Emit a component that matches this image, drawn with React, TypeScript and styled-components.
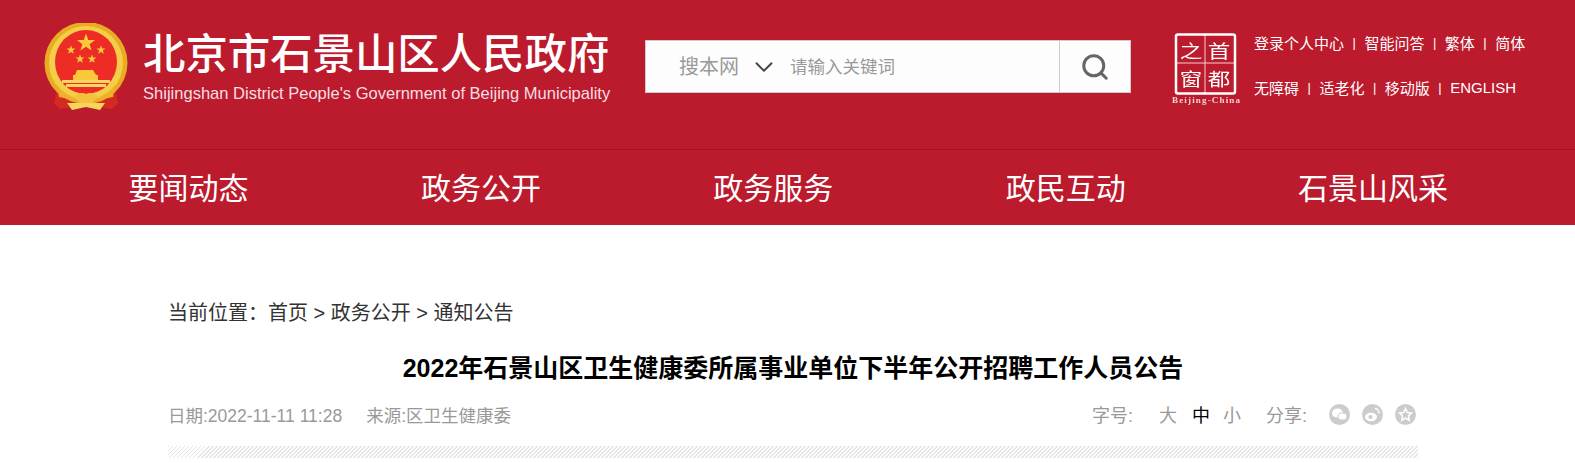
import styled, { createGlobalStyle } from "styled-components";
import { ChevronDown, Search } from "lucide-react";

const GlobalStyle = createGlobalStyle`
  html, body {
    margin: 0;
    padding: 0;
    background: #fff;
    overflow: hidden;
  }
  body {
    font-family: "Liberation Sans", "Noto Sans CJK SC", sans-serif;
  }
`;

const Page = styled.div`
  width: 1575px;
  height: 463px;
  overflow: hidden;
`;
const Header = styled.header`
  display: flex;
  align-items: flex-start;
  height: 149px;
  background: #bc1a2d;
  border-bottom: 1px solid #a01526;
  color: #fff;
`;
const Brand = styled.div`
  display: flex;
  width: 645px;
  padding: 23px 0 0 44px;
  box-sizing: border-box;
`;
const EmblemArt = styled.svg`
  display: block;
  flex: none;
  width: 84px;
  height: 90px;
  filter: blur(0.4px);
`;
const BrandText = styled.div`
  margin-left: 15px;
  padding-top: 7px;
`;
const BrandName = styled.div`
  font-size: 42.4px;
  line-height: 50px;
  font-weight: 500;
  white-space: nowrap;
`;
const BrandSub = styled.div`
  margin-top: 4px;
  font-size: 16.55px;
  line-height: 20px;
  color: #f6dfe2;
  white-space: nowrap;
`;
const SearchBox = styled.div`
  display: flex;
  align-items: center;
  width: 486px;
  height: 53px;
  margin-top: 40px;
  background: #fdfdfd;
  border: 1px solid #ccc;
  box-sizing: border-box;
`;
const SearchScope = styled.span`
  margin: 0 0 3px 33px;
  font-size: 20px;
  color: #999;
`;
const Chevron = styled(ChevronDown)`
  margin-left: 10px;
  color: #444;
`;
const SearchHint = styled.span`
  margin: 0 0 2px 11px;
  flex: 1;
  font-size: 17.5px;
  color: #999;
`;
const SearchButton = styled.div`
  display: flex;
  align-items: center;
  justify-content: center;
  width: 70px;
  height: 100%;
  border-left: 1px solid #ccc;
  color: #666;
`;
const Stamp = styled.svg`
  display: block;
  flex: none;
  width: 72px;
  height: 76px;
  margin: 33px 0 0 39px;
  filter: blur(0.3px);
`;
const StampChar = styled.text`
  fill: #fff;
  font-size: 18px;
  text-anchor: middle;
  font-family: "Noto Sans CJK SC", sans-serif;
`;
const StampCaption = styled.text`
  fill: #f3d3d7;
  font-size: 9px;
  font-weight: 700;
  font-family: "Liberation Serif", serif;
`;
const Links = styled.div`
  margin: 32px 0 0 12px;
`;
const LinkRow = styled.div`
  display: flex;
  height: 20px;
  align-items: center;
  margin-bottom: 25px;
  font-size: 15px;
  white-space: nowrap;
`;
const Sep = styled.span`
  margin: 0 8.5px;
  font-size: 13px;
`;
const Nav = styled.nav`
  display: flex;
  gap: 172.4px;
  height: 75px;
  padding: 0 0 3px 128.5px;
  box-sizing: border-box;
  align-items: center;
  background: #bc1a2d;
  color: #fff;
  font-size: 30px;
  white-space: nowrap;
`;
const Article = styled.main`
  width: 1250px;
  margin-left: 168px;
`;
const Crumbs = styled.div`
  padding-top: 75px;
  font-size: 20px;
  line-height: 26px;
  color: #333;
`;
const Title = styled.h1`
  margin: 26px 0 0;
  font-size: 25px;
  line-height: 32px;
  font-weight: 700;
  color: #000;
  text-align: center;
`;
const Meta = styled.div`
  display: flex;
  align-items: center;
  justify-content: space-between;
  height: 26px;
  margin-top: 17px;
  font-size: 18px;
  color: #999;
`;
const MetaLeft = styled.div`
  display: flex;
  gap: 24px;
  font-size: 17.5px;
`;
const Tools = styled.div`
  display: flex;
  align-items: center;
  padding-right: 2px;
`;
const Size = styled.span<{ $gap: number; $on?: boolean }>`
  margin-left: ${(p) => p.$gap}px;
  color: ${(p) => (p.$on ? "#000" : "#999")};
`;
const ToolLabel = styled.span<{ $gap?: number }>`
  margin-left: ${(p) => p.$gap ?? 0}px;
`;
const ShareIcon = styled.svg`
  display: block;
  width: 21px;
  height: 21px;
  margin-left: 12px;
  &:first-of-type {
    margin-left: 22px;
  }
`;
const Hatch = styled.div`
  height: 12px;
  margin-top: 19px;
  background: repeating-linear-gradient(135deg, #e4e4e4 0 1.4px, #fff 1.4px 2.83px);
`;

const star = "M0-10 2.4-3.2 9.5-3.1 3.8 1.2 5.9 8 0 4 -5.9 8 -3.8 1.2 -9.5-3.1 -2.4-3.2Z";

function Emblem() {
  return (
    <EmblemArt viewBox="0 0 84 90">
      <path d="M14 62 L10 80 L16 86 L30 84 L42 78 L54 84 L68 86 L74 80 L70 62Z" fill="#d42a22" />
      <ellipse cx="42" cy="40" rx="41.5" ry="41" fill="#e8ac23" />
      <ellipse cx="42" cy="40" rx="37" ry="37" fill="#f4cd49" />
      <ellipse cx="42" cy="39" rx="31" ry="32" fill="#ec2c25" />
      <g fill="#f7c93b">
        <path d={star} transform="translate(42 20) scale(0.95)" />
        <path d={star} transform="translate(27 27) scale(0.48)" />
        <path d={star} transform="translate(57 27) scale(0.48)" />
        <path d={star} transform="translate(36 36) scale(0.48)" />
        <path d={star} transform="translate(48 36) scale(0.48)" />
        <path d="M33 47h16l3 5h2v5h-25v-5h2z" />
      </g>
      <path d="M18 57h48v3H18zM22 61h40v3H22z" fill="#f6d561" />
      <path d="M13 62q6 8 14 11l8 5h14l8-5q8-3 14-11l-2 12-20 4h-14l-20-4z" fill="#eeb12b" />
      <path d="M30 74q6-6 12-3q6-3 12 3l-6 6h-12z" fill="#f4c23e" />
      <path d="M23 80h38l-5 7-14-3-14 3z" fill="#f7d45a" />
    </EmblemArt>
  );
}

function BeijingStamp() {
  return (
    <Stamp viewBox="0 0 72 76">
      <rect x="6" y="1.5" width="59" height="59" rx="2" fill="none" stroke="#fff" strokeWidth="2.5" />
      <path d="M35 2v58M7 30h57" stroke="#fff" strokeWidth="1" opacity="0.8" />
      <StampChar transform="translate(21 25) scale(1.25 1)">之</StampChar>
      <StampChar transform="translate(49 25) scale(1.25 1)">首</StampChar>
      <StampChar transform="translate(21 53) scale(1.25 1)">窗</StampChar>
      <StampChar transform="translate(49 53) scale(1.25 1)">都</StampChar>
      <StampCaption x="2" y="70" textLength={68}>
        Beijing-China
      </StampCaption>
    </Stamp>
  );
}

function App() {
  return (
    <Page>
      <GlobalStyle />
      <Header>
        <Brand>
          <Emblem />
          <BrandText>
            <BrandName>北京市石景山区人民政府</BrandName>
            <BrandSub>Shijingshan District People's Government of Beijing Municipality</BrandSub>
          </BrandText>
        </Brand>
        <SearchBox>
          <SearchScope>搜本网</SearchScope>
          <Chevron size={30} strokeWidth={1.5} />
          <SearchHint>请输入关键词</SearchHint>
          <SearchButton>
            <Search size={30} strokeWidth={2.4} />
          </SearchButton>
        </SearchBox>
        <BeijingStamp />
        <Links>
          <LinkRow>
            登录个人中心<Sep>|</Sep>智能问答<Sep>|</Sep>繁体<Sep>|</Sep>简体
          </LinkRow>
          <LinkRow>
            无障碍<Sep>|</Sep>适老化<Sep>|</Sep>移动版<Sep>|</Sep>ENGLISH
          </LinkRow>
        </Links>
      </Header>
      <Nav>
        <span>要闻动态</span>
        <span>政务公开</span>
        <span>政务服务</span>
        <span>政民互动</span>
        <span>石景山风采</span>
      </Nav>
      <Article>
        <Crumbs>当前位置：首页 &gt; 政务公开 &gt; 通知公告</Crumbs>
        <Title>2022年石景山区卫生健康委所属事业单位下半年公开招聘工作人员公告</Title>
        <Meta>
          <MetaLeft>
            <span>日期:2022-11-11 11:28</span>
            <span>来源:区卫生健康委</span>
          </MetaLeft>
          <Tools>
            <span>字号:</span>
            <Size $gap={26}>大</Size>
            <Size $gap={15} $on>
              中
            </Size>
            <Size $gap={13}>小</Size>
            <ToolLabel $gap={25}>分享:</ToolLabel>
            <ShareIcon viewBox="0 0 21 21">
              <circle cx="10.5" cy="10.5" r="10.5" fill="#ccc" />
              <ellipse cx="8.5" cy="9" rx="5.5" ry="4.5" fill="#fff" />
              <ellipse cx="13.5" cy="12.5" rx="4.5" ry="3.6" fill="#fff" stroke="#ccc" />
            </ShareIcon>
            <ShareIcon viewBox="0 0 21 21">
              <circle cx="10.5" cy="10.5" r="10.5" fill="#ccc" />
              <ellipse cx="9" cy="13" rx="6" ry="4.2" fill="#fff" />
              <circle cx="8.5" cy="13" r="2" fill="#ccc" />
              <path d="M13 4.5a4.5 4.5 0 0 1 4 5" fill="none" stroke="#fff" strokeWidth="1.4" />
            </ShareIcon>
            <ShareIcon viewBox="0 0 21 21">
              <circle cx="10.5" cy="10.5" r="10.5" fill="#ccc" />
              <path
                d="M10.5 4.5 12.3 8.5 16.5 9 13.4 12 14.2 16.2 10.5 14 6.8 16.2 7.6 12 4.5 9 8.7 8.5Z"
                fill="none"
                stroke="#fff"
                strokeWidth="1.5"
              />
            </ShareIcon>
          </Tools>
        </Meta>
        <Hatch />
      </Article>
    </Page>
  );
}

export default App;
